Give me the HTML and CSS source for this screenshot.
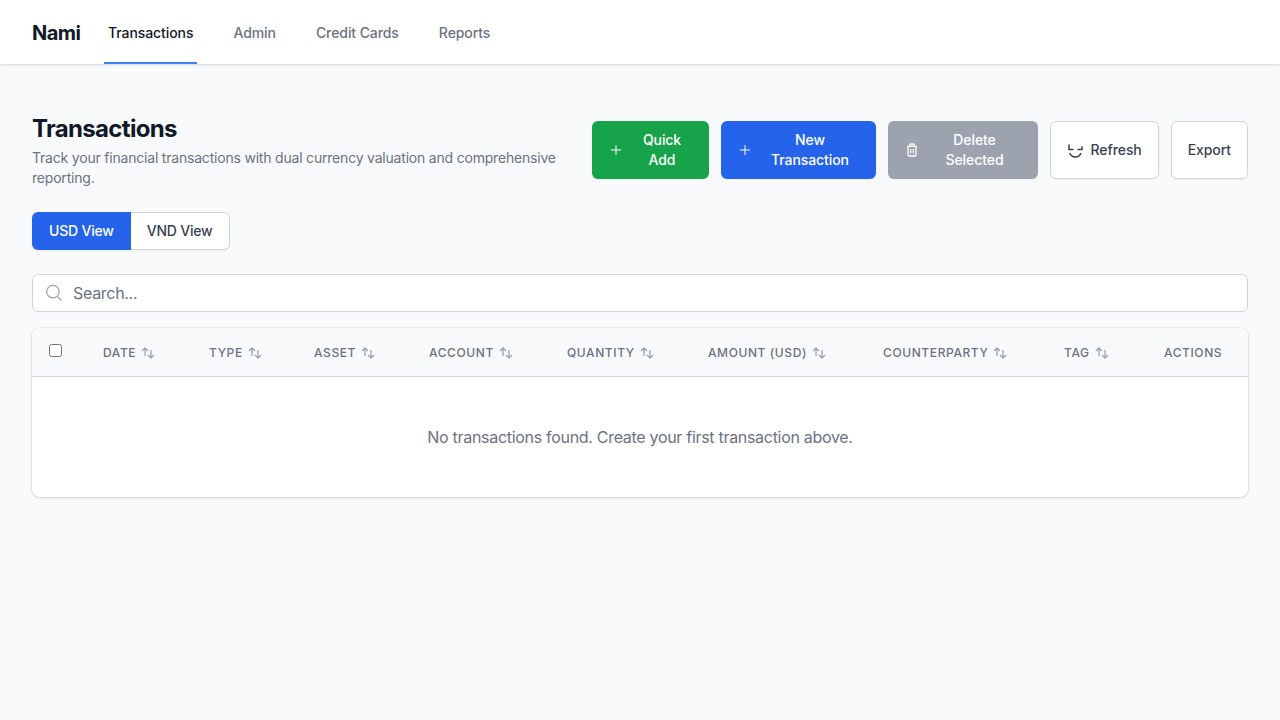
FILE: index.html
```html
<!DOCTYPE html>
<html lang="en">
<head>
<meta charset="utf-8">
<title>Nami - Transactions</title>
<link rel="stylesheet" href="styles.css">
</head>
<body>
<header class="topbar">
  <div class="brand">Nami</div>
  <nav class="nav">
    <a class="nav-link active">Transactions</a>
    <a class="nav-link">Admin</a>
    <a class="nav-link">Credit Cards</a>
    <a class="nav-link">Reports</a>
  </nav>
</header>
<main class="main">
  <section class="page-head">
    <div class="page-title">
      <h1>Transactions</h1>
      <p>Track your financial transactions with dual currency valuation and comprehensive reporting.</p>
    </div>
    <div class="actions">
      <button class="btn btn-green w-quick"><svg class="ico" viewBox="0 0 24 24"><path d="M12 4.5v15m7.5-7.5h-15"/></svg><span class="btn-label">Quick Add</span></button>
      <button class="btn btn-blue w-new"><svg class="ico" viewBox="0 0 24 24"><path d="M12 4.5v15m7.5-7.5h-15"/></svg><span class="btn-label">New Transaction</span></button>
      <button class="btn btn-gray w-del"><svg class="ico-sm" viewBox="0 0 24 24"><path d="M4.5 6.5h15M9 6.500V4a1 1 0 0 1 1-1h4a1 1 0 0 1 1 1v2.500M6 6.500V19a2 2 0 0 0 2 2h8a2 2 0 0 0 2-2V6.500M10 10.500v6.500M14 10.500v6.500"/></svg><span class="btn-label">Delete Selected</span></button>
      <button class="btn btn-white"><svg class="ico-refresh" viewBox="0 0 16 16"><path d="M2 2.500v5h4.500M10.500 7.500H15V4.500M2.700 11a6 6 0 0 0 11.300 0"/></svg><span class="btn-text">Refresh</span></button>
      <button class="btn btn-white"><span class="btn-text">Export</span></button>
    </div>
  </section>
  <div class="view-toggle">
    <button class="toggle on">USD View</button>
    <button class="toggle">VND View</button>
  </div>
  <label class="search">
    <svg class="search-ico" viewBox="0 0 24 24"><path d="m21 21-5.2-5.2m0 0A7.5 7.500 0 1 0 5.200 5.200a7.500 7.500 0 0 0 10.600 10.600Z"/></svg>
    <input class="search-input" type="text" placeholder="Search...">
  </label>
  <div class="table-card">
    <table class="table">
      <colgroup>
        <col class="c-check"><col class="c-date"><col class="c-type"><col class="c-asset"><col class="c-account"><col class="c-qty"><col class="c-amount"><col class="c-party"><col class="c-tag"><col class="c-actions">
      </colgroup>
      <thead>
        <tr>
          <th><input class="check" type="checkbox"></th>
          <th><span class="th-in">Date <svg class="sort" viewBox="0 0 16 16"><use href="#sort"/></svg></span></th>
          <th><span class="th-in">Type <svg class="sort" viewBox="0 0 16 16"><use href="#sort"/></svg></span></th>
          <th><span class="th-in">Asset <svg class="sort" viewBox="0 0 16 16"><use href="#sort"/></svg></span></th>
          <th><span class="th-in">Account <svg class="sort" viewBox="0 0 16 16"><use href="#sort"/></svg></span></th>
          <th><span class="th-in">Quantity <svg class="sort" viewBox="0 0 16 16"><use href="#sort"/></svg></span></th>
          <th><span class="th-in">Amount (USD) <svg class="sort" viewBox="0 0 16 16"><use href="#sort"/></svg></span></th>
          <th><span class="th-in">Counterparty <svg class="sort" viewBox="0 0 16 16"><use href="#sort"/></svg></span></th>
          <th><span class="th-in">Tag <svg class="sort" viewBox="0 0 16 16"><use href="#sort"/></svg></span></th>
          <th><span class="th-in">Actions</span></th>
        </tr>
      </thead>
      <tbody>
        <tr><td class="empty" colspan="10">No transactions found. Create your first transaction above.</td></tr>
      </tbody>
    </table>
  </div>
</main>
<svg class="defs" width="0" height="0"><defs><g id="sort"><path d="M5 11V3M2 6l3-3 3 3"/><path d="M11 5v8M8 10l3 3 3-3"/></g></defs></svg>
</body>
</html>
```

FILE: styles.css
```css
* { box-sizing: border-box; }
html, body { margin: 0; padding: 0; }
body {
  min-height: 720px;
  background: #f9fafb;
  color: #111827;
  font-family: Inter, "Liberation Sans", sans-serif;
  font-size: 14px;
}
.defs { position: absolute; }
.topbar {
  display: flex;
  height: 64px;
  padding: 0 32px;
  background: #fff;
  box-shadow: 0 1px 3px rgba(0,0,0,.1), 0 1px 2px -1px rgba(0,0,0,.1);
}
.brand {
  display: flex;
  align-items: center;
  height: 65px;
  font-size: 20px;
  font-weight: 700;
  line-height: 28px;
  letter-spacing: -.5px;
  color: #111827;
}
.nav { display: flex; gap: 32px; margin-left: 23px; height: 64px; }
.nav-link {
  display: flex;
  align-items: center;
  padding: 3px 3.5px 0 4.5px;
  height: 64px;
  font-size: 14px;
  font-weight: 500;
  line-height: 20px;
  letter-spacing: -.08px;
  color: #6b7280;
  border-bottom: 2px solid transparent;
}
.nav-link.active { color: #111827; border-bottom-color: #3b82f6; }
.main { padding: 50px 32px 48px; }
.page-head { display: flex; align-items: flex-start; justify-content: space-between; }
.page-title { width: 540px; }
h1 { margin: 0; font-size: 24px; line-height: 30px; font-weight: 700; letter-spacing: -.67px; color: #111827; }
.page-title p { margin: 4px 0 0; font-size: 14px; line-height: 20px; letter-spacing: -.2px; color: #6b7280; }
.actions { display: flex; gap: 12px; margin-top: 7px; }
.btn {
  display: flex;
  align-items: center;
  height: 58px;
  padding: 8px 16px;
  border: 0;
  border-radius: 6px;
  font: 500 14px/20px Inter, "Liberation Sans", sans-serif;
  letter-spacing: -.08px;
  color: #fff;
  box-shadow: 0 1px 2px rgba(0,0,0,.05);
}
.btn-label { flex: 1; text-align: center; }
.btn-green { background: #16a34a; }
.btn-blue { background: #2563eb; }
.btn-gray { background: #9ca3af; }
.btn-white { background: #fff; color: #374151; border: 1px solid #d1d5db; }
.w-quick { width: 117px; }
.w-new { width: 155px; }
.w-del { width: 150px; }
.ico { width: 16px; height: 16px; margin-right: 8px; flex: none; fill: none; stroke: #fff; stroke-width: 1.5; }
.ico-sm { width: 16px; height: 16px; margin-right: 8px; flex: none; fill: none; stroke: #fff; stroke-width: 1.9; }
.ico-refresh { width: 16px; height: 16px; margin-right: 8px; flex: none; fill: none; stroke: #374151; stroke-width: 1.5; }
.view-toggle {
  display: inline-flex;
  margin-top: 24px;
  vertical-align: top;
  border-radius: 6px;
  box-shadow: 0 1px 2px rgba(0,0,0,.05);
}
.toggle {
  height: 38px;
  padding: 0 16px;
  border: 1px solid #d1d5db;
  border-left: 0;
  border-radius: 0 6px 6px 0;
  background: #fff;
  font: 500 14px/20px Inter, "Liberation Sans", sans-serif;
  letter-spacing: -.2px;
  color: #374151;
}
.toggle.on {
  padding: 0 17px;
  border: 0;
  border-radius: 6px 0 0 6px;
  background: #2563eb;
  color: #fff;
}
.search {
  display: flex;
  align-items: center;
  height: 38px;
  margin-top: 24px;
  padding-left: 11px;
  background: #fff;
  border: 1px solid #d1d5db;
  border-radius: 6px;
}
.search-ico { width: 20px; height: 20px; flex: none; fill: none; stroke: #9ca3af; stroke-width: 1.5; }
.search-input {
  flex: 1;
  margin-left: 9px;
  padding: 0;
  border: 0;
  outline: 0;
  background: transparent;
  font: 400 16px/24px Inter, "Liberation Sans", sans-serif;
  letter-spacing: -.3px;
  color: #111827;
}
.search-input::placeholder { color: #6b7280; opacity: 1; }
.table-card {
  margin-top: 16px;
  background: #fff;
  border-radius: 8px;
  overflow: hidden;
  box-shadow: 0 0 0 1px rgba(0,0,0,.05), 0 1px 3px rgba(0,0,0,.1), 0 1px 2px -1px rgba(0,0,0,.1);
}
.table { width: 100%; border-collapse: collapse; table-layout: fixed; }
.c-check { width: 55px; }
.c-date { width: 106px; }
.c-type { width: 105px; }
.c-asset { width: 115px; }
.c-account { width: 138px; }
.c-qty { width: 141px; }
.c-amount { width: 175px; }
.c-party { width: 181px; }
.c-tag { width: 100px; }
.c-actions { width: 100px; }
th {
  height: 48px;
  padding: 2px 0 0 16px;
  background: #f9fafb;
  border-bottom: 1px solid #d1d5db;
  text-align: left;
  white-space: nowrap;
  font-size: 12px;
  line-height: 16px;
  font-weight: 500;
  letter-spacing: .05em;
  text-transform: uppercase;
  color: #6b7280;
}
.th-in { display: inline-flex; align-items: center; gap: 4px; }
.check {
  display: block;
  width: 13px;
  height: 13px;
  margin: -2px 0 2px 1px;
}
.sort { width: 16px; height: 16px; flex: none; fill: none; stroke: #9ca3af; stroke-width: 1.3; }
.empty {
  padding: 48px 0;
  text-align: center;
  font-size: 16px;
  line-height: 24px;
  letter-spacing: -.3px;
  color: #6b7280;
}
```
